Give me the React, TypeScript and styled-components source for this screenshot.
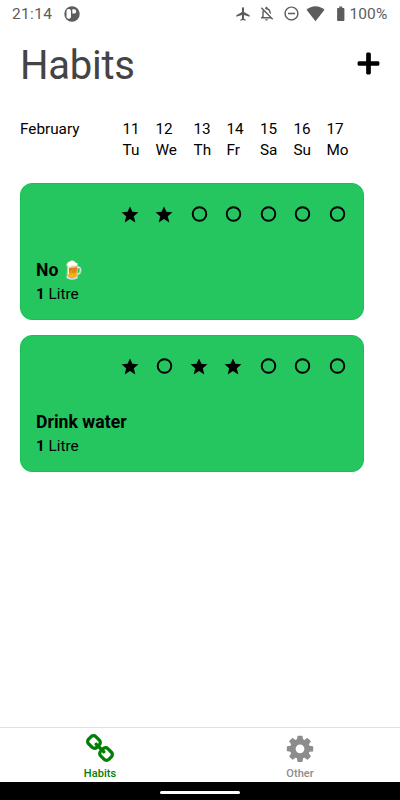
import React from "react";
import styled, { createGlobalStyle } from "styled-components";
import {
  MdAirplanemodeActive,
  MdOutlineNotificationsOff,
  MdRemoveCircleOutline,
  MdBatteryFull,
} from "react-icons/md";
import { FaPlus } from "react-icons/fa";

const GlobalStyle = createGlobalStyle`
  * { box-sizing: border-box; }
  body { margin: 0; background: #fff; }
`;

const Screen = styled.div`
  width: 400px;
  height: 800px;
  display: flex;
  flex-direction: column;
  overflow: hidden;
  background: #fff;
  color: #000;
  font-family: Roboto, sans-serif;
`;

const StatusBar = styled.div`
  height: 28px;
  flex: none;
  display: flex;
  align-items: center;
  padding: 0 12px;
  color: #5c5c5c;
  font-size: 15.5px;
  line-height: 28px;
`;

const Clock = styled.span`
  width: 51.5px;
  letter-spacing: 0.35px;
`;

const StatusIcon = styled.span<{ $size: number; $left?: number; $top?: number }>`
  display: flex;
  margin-left: ${(p) => p.$left ?? 0}px;
  margin-top: ${(p) => p.$top ?? 0}px;
  svg {
    display: block;
    width: ${(p) => p.$size}px;
    height: ${(p) => p.$size}px;
  }
`;

const Spacer = styled.div`
  flex: 1;
`;

const Percent = styled.span`
  width: 38.5px;
  letter-spacing: 0.1px;
  white-space: nowrap;
`;

const TitleBar = styled.header`
  height: 72px;
  flex: none;
  display: flex;
  justify-content: space-between;
  padding: 12px 19px 0 20px;
`;

const Title = styled.h1`
  margin: 0;
  font-size: 40px;
  font-weight: 400;
  line-height: 52px;
  letter-spacing: -0.25px;
  color: #444;
`;

const AddButton = styled.button`
  width: 25px;
  height: 25px;
  margin-top: 11px;
  padding: 0;
  border: 0;
  background: none;
  color: #000;
  svg {
    display: block;
    width: 25px;
    height: 25px;
  }
`;

const Calendar = styled.div`
  flex: none;
  height: 83px;
  padding: 19px 0 0 20px;
  display: grid;
  grid-template-columns: 102.5px 33px 38px 33px 33.5px 33.5px 33px 40px;
  align-content: start;
  font-size: 15.3px;
  line-height: 21px;
`;

const Day = styled.div`
  display: flex;
  flex-direction: column;
`;

const HabitList = styled.main`
  flex: 1;
  display: flex;
  flex-direction: column;
  gap: 15.5px;
  padding: 0 36px 0 20px;
`;

const Card = styled.article`
  height: 136.5px;
  flex: none;
  padding: 20px 9px 0 15px;
  border: 1px solid #16c254;
  border-radius: 12px;
  background: #25c55f;
`;

const Marks = styled.div`
  display: grid;
  grid-template-columns: repeat(7, 34.6px);
  margin: 0 0 36px 76.5px;
`;

const Mark = styled.svg`
  display: block;
  width: 20px;
  height: 20px;
  margin-left: 7px;
`;

const HabitName = styled.h2`
  margin: 0;
  height: 20px;
  font-size: 17.6px;
  font-weight: 700;
  line-height: 20px;
  letter-spacing: 0.02px;
  display: flex;
  align-items: center;
`;

const Emoji = styled.span`
  margin-left: 4px;
  font-size: 17.5px;
  font-weight: 400;
  font-family: "Noto Color Emoji", Roboto, sans-serif;
`;

const Amount = styled.p`
  margin: 4px 0 0;
  font-size: 15.3px;
  line-height: 20px;
`;

const TabBar = styled.nav`
  height: 55px;
  flex: none;
  display: flex;
  border-top: 1px solid #e0e0e0;
`;

const Tab = styled.a<{ $active?: boolean }>`
  flex: 1;
  display: flex;
  flex-direction: column;
  align-items: center;
  padding-top: 6px;
  font-size: 11px;
  font-weight: 500;
  line-height: 13px;
  letter-spacing: 0.05px;
  color: ${(p) => (p.$active ? "#008000" : "#8c8c8c")};
`;

const TabIcon = styled.svg`
  display: block;
  width: 28px;
  height: 28px;
  margin-bottom: 5px;
  fill: currentColor;
`;

const SystemBar = styled.footer`
  height: 18px;
  flex: none;
  display: flex;
  justify-content: center;
  padding-top: 9px;
  background: #000;
`;

const Handle = styled.div`
  width: 80px;
  height: 2.5px;
  border-radius: 2px;
  background: #fff;
`;

const days = [
  ["11", "Tu"],
  ["12", "We"],
  ["13", "Th"],
  ["14", "Fr"],
  ["15", "Sa"],
  ["16", "Su"],
  ["17", "Mo"],
];

const habits = [
  { name: "No", emoji: "🍺", done: [1, 1, 0, 0, 0, 0, 0] },
  { name: "Drink water", emoji: "", done: [1, 0, 1, 1, 0, 0, 0] },
];

function DayMark({ done }: { done: boolean }) {
  return (
    <Mark viewBox="0 0 20 20">
      {done ? (
        <path d="M10 2.500l2.400 5.300 6 .5-4.600 3.900 1.500 6.200-5.300-3.400-5.300 3.400 1.500-6.200-4.600-3.900 6-.5z" />
      ) : (
        <circle cx="10.500" cy="10" r="6.800" fill="none" stroke="#000" strokeWidth="1.900" />
      )}
    </Mark>
  );
}

export default function App() {
  return (
    <>
      <GlobalStyle />
      <Screen>
        <StatusBar>
          <Clock>21:14</Clock>
          <StatusIcon $size={16} $top={-1}>
            <svg viewBox="0 0 16 16">
              <circle cx="8" cy="8" r="7.700" fill="#5c5c5c" />
              <rect x="2.500" y="3" width="4.500" height="9.800" rx="2" fill="#fff" />
              <path d="M8.300 3.200h1.700a2.200 2.200 0 0 1 0 4.400H8.300z" fill="#fff" />
            </svg>
          </StatusIcon>
          <Spacer />
          <StatusIcon $size={16} $top={-1}><MdAirplanemodeActive /></StatusIcon>
          <StatusIcon $size={17} $left={7} $top={-1}><MdOutlineNotificationsOff /></StatusIcon>
          <StatusIcon $size={17} $left={8} $top={-2}><MdRemoveCircleOutline /></StatusIcon>
          <StatusIcon $size={19} $left={6} $top={-2}>
            <svg viewBox="0 0 19 19">
              <path d="M9.500 17.200L.5 5.800Q4.500 2.200 9.500 2.200t9 3.600z" fill="currentColor" />
            </svg>
          </StatusIcon>
          <StatusIcon $size={17.5} $left={7} $top={-1}><MdBatteryFull /></StatusIcon>
          <Percent>100%</Percent>
        </StatusBar>

        <TitleBar>
          <Title>Habits</Title>
          <AddButton aria-label="Add habit"><FaPlus /></AddButton>
        </TitleBar>

        <Calendar>
          <span>February</span>
          {days.map(([date, name]) => (
            <Day key={date}>
              <span>{date}</span>
              <span>{name}</span>
            </Day>
          ))}
        </Calendar>

        <HabitList>
          {habits.map((habit) => (
            <Card key={habit.name}>
              <Marks>
                {habit.done.map((done, i) => (
                  <DayMark key={i} done={done === 1} />
                ))}
              </Marks>
              <HabitName>
                {habit.name}
                {habit.emoji && <Emoji>{habit.emoji}</Emoji>}
              </HabitName>
              <Amount><b>1</b> Litre</Amount>
            </Card>
          ))}
        </HabitList>

        <TabBar>
          <Tab $active>
            <TabIcon viewBox="16 16 1632 1632">
              <path d="M1456 1216q0-40-28-68l-208-208q-28-28-68-28-42 0-72 32 3 3 19 18.500t21.500 21.500 15 19 13 25.500 3.500 27.500q0 40-28 68t-68 28q-15 0-27.500-3.500t-25.500-13-19-15-21.500-21.500-18.500-19q-33 31-33 73 0 40 28 68l206 207q27 27 68 27 40 0 68-26l147-146q28-28 28-67zm-703-705q0-40-28-68l-206-207q-28-28-68-28-39 0-68 27l-147 146q-28 28-28 67 0 40 28 68l208 208q27 27 68 27 42 0 72-31-3-3-19-18.500t-21.500-21.500-15-19-13-25.500-3.500-27.500q0-40 28-68t68-28q15 0 27.500 3.500t25.500 13 19 15 21.500 21.500 18.500 19q33-31 33-73zm895 705q0 120-85 203l-147 146q-83 83-203 83-121 0-204-85l-206-207q-83-83-83-203 0-123 88-209l-88-88q-86 88-208 88-120 0-204-84l-208-208q-84-84-84-204t85-203l147-146q83-83 203-83 121 0 204 85l206 207q83 83 83 203 0 123-88 209l88 88q86-88 208-88 120 0 204 84l208 208q84 84 84 204z" />
            </TabIcon>
            Habits
          </Tab>
          <Tab>
            <TabIcon viewBox="-24 32 1584 1632">
              <path d="M1024 896q0-106-75-181t-181-75-181 75-75 181 75 181 181 75 181-75 75-181zm512-109v222q0 12-8 23t-20 13l-185 28q-19 54-39 91 35 50 107 138 10 12 10 25t-9 23q-27 37-99 108t-94 71q-12 0-26-9l-138-108q-44 23-91 38-16 136-29 186-7 28-36 28h-222q-14 0-24.500-8.500t-11.500-21.500l-28-184q-49-16-90-37l-141 107q-10 9-25 9-14 0-25-11-126-114-165-168-7-10-7-23 0-12 8-23 15-21 51-66.500t54-70.500q-27-50-41-99l-183-27q-13-2-21-12.500t-8-23.500v-222q0-12 8-23t19-13l186-28q14-46 39-92-40-57-107-138-10-12-10-24 0-10 9-23 26-36 98.500-107.500t94.500-71.500q13 0 26 10l138 107q44-23 91-38 16-136 29-186 7-28 36-28h222q14 0 24.500 8.500t11.500 21.500l28 184q49 16 90 37l142-107q9-9 24-9 13 0 25 10 129 119 165 170 7 8 7 22 0 12-8 23-15 21-51 66.500t-54 70.500q26 50 41 98l183 28q13 2 21 12.500t8 23.500z" />
            </TabIcon>
            Other
          </Tab>
        </TabBar>
        <SystemBar>
          <Handle />
        </SystemBar>
      </Screen>
    </>
  );
}
